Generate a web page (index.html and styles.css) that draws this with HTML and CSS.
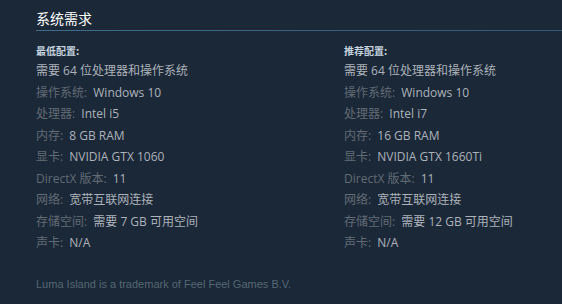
FILE: index.html
```html
<!DOCTYPE html>
<html lang="zh-CN">
<head>
<meta charset="utf-8">
<link rel="stylesheet" href="styles.css">
</head>
<body>
<div class="page">
  <h2 class="title">系统需求</h2>
  <div class="rule"></div>
  <div class="cols">
    <div class="col">
      <div class="col-head">最低配置:</div>
      <ul class="reqs">
        <li class="first">需要 64 位处理器和操作系统</li>
        <li><span class="lbl">操作系统:</span> Windows 10</li>
        <li><span class="lbl">处理器:</span> Intel i5</li>
        <li><span class="lbl">内存:</span> 8 GB RAM</li>
        <li><span class="lbl">显卡:</span> NVIDIA GTX 1060</li>
        <li><span class="lbl">DirectX 版本:</span> 11</li>
        <li><span class="lbl">网络:</span> 宽带互联网连接</li>
        <li><span class="lbl">存储空间:</span> 需要 7 GB 可用空间</li>
        <li><span class="lbl">声卡:</span> N/A</li>
      </ul>
    </div>
    <div class="col">
      <div class="col-head">推荐配置:</div>
      <ul class="reqs">
        <li class="first">需要 64 位处理器和操作系统</li>
        <li><span class="lbl">操作系统:</span> Windows 10</li>
        <li><span class="lbl">处理器:</span> Intel i7</li>
        <li><span class="lbl">内存:</span> 16 GB RAM</li>
        <li><span class="lbl">显卡:</span> NVIDIA GTX 1660Ti</li>
        <li><span class="lbl">DirectX 版本:</span> 11</li>
        <li><span class="lbl">网络:</span> 宽带互联网连接</li>
        <li><span class="lbl">存储空间:</span> 需要 12 GB 可用空间</li>
        <li><span class="lbl">声卡:</span> N/A</li>
      </ul>
    </div>
  </div>
  <p class="legal">Luma Island is a trademark of Feel Feel Games B.V.</p>
</div>
</body>
</html>
```

FILE: styles.css
```css
html, body {
  margin: 0;
  padding: 0;
  background: #1b2838;
  overflow: hidden;
}
body {
  font-family: "Open Sans", "Noto Sans CJK SC", sans-serif;
  color: #acb2b8;
}
.page {
  padding-left: 36px;
  width: 616px;
}
.title {
  margin: 0;
  padding-top: 9px;
  font-size: 14px;
  line-height: 18px;
  font-weight: normal;
  color: #ffffff;
  font-family: "Noto Sans CJK SC", sans-serif;
  height: 21px;
}
.rule {
  height: 1px;
  background: linear-gradient(to right, #3f6c8a, #2f5570);
}
.cols {
  display: grid;
  grid-template-columns: 308px 308px;
  padding-top: 13px;
}
.col-head {
  font-size: 10px;
  font-weight: bold;
  line-height: 14px;
  color: #c6d4df;
  font-family: "Noto Sans CJK SC", sans-serif;
}
.reqs {
  list-style: none;
  margin: 0;
  padding: 0;
  font-size: 12px;
}
.reqs li {
  line-height: 21.5px;
}
.reqs li.first {
  margin-top: 2px;
}
.lbl {
  color: #626b74;
  margin-right: 3px;
}
.legal {
  margin: 23px 0 0;
  font-size: 11px;
  line-height: 14px;
  color: #556772;
  font-family: "Liberation Sans", Arial, sans-serif;
}
```
